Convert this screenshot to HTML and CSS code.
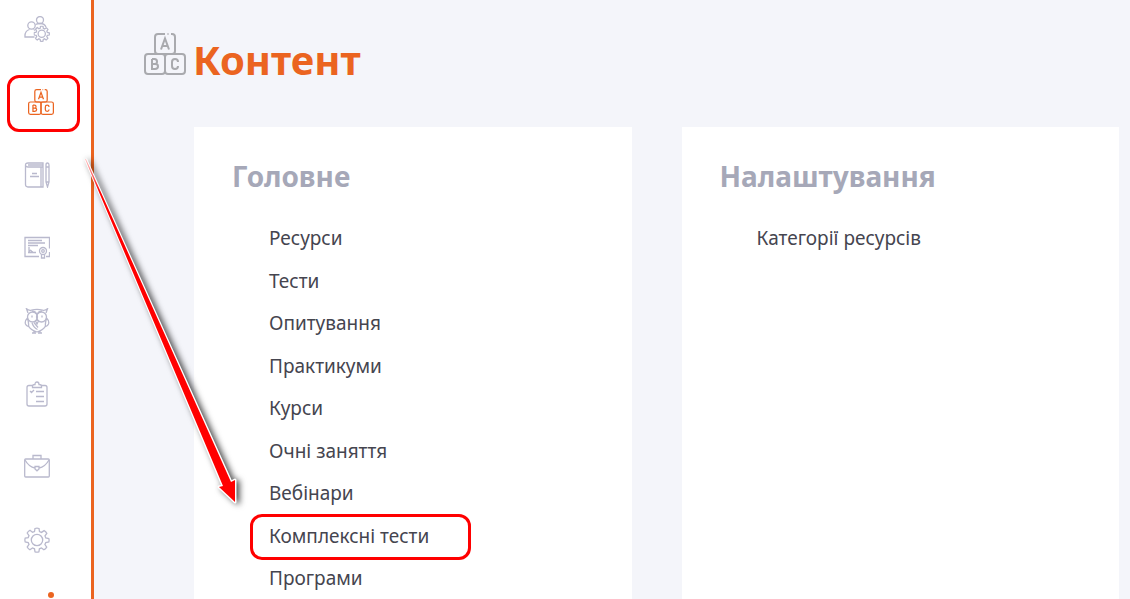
FILE: index.html
```html
<!DOCTYPE html>
<html lang="uk">
<head>
    <meta charset="UTF-8">
    <meta name="viewport" content="width=device-width, initial-scale=1.0">
    <title>Контент</title>
    <link rel="stylesheet" href="styles.css">
</head>
<body>
    <!-- Shared icon shapes -->
    <svg class="sprite" aria-hidden="true">
        <symbol id="icon-blocks" viewBox="0 0 42 42">
            <path d="M21 1h-7q-3 0-3 3v14q0 3 3 3h14q3 0 3-3V4q0-3-3-3h-1M23.500 1h1"/>
            <rect x="1" y="21" width="20" height="20" rx="3"/>
            <rect x="21" y="21" width="20" height="20" rx="3"/>
            <path d="M17 16.500l4-11 4 11M18 13h6"/>
            <path d="M8 26v10h3q3 0 3-2.800 0-2.200-3-2.200H8M8 26h2.500q2.500 0 2.500 2.500T11 31"/>
            <path d="M34 29q0-3-3-3t-3 3v4q0 3 3 3t3-3"/>
        </symbol>
        <symbol id="icon-gear" viewBox="0 0 26 26">
            <path d="M10.500 4.500 11 1.500q2-.8 4 0l.5 3 2 .9 2.600-1.800q1.800 1 2.700 2.800L21 8.900l.8 2.100 3 .5q.6 1.500 0 3.500l-3 .5-.9 2 1.800 2.600q-1 1.700-2.800 2.700l-2.500-1.800-2 .8-.5 3q-2 .6-3.900 0l-.5-3-2-.8-2.600 1.800q-1.700-1-2.700-2.800L5 17.500l-.8-2-3-.5q-.6-2 0-3.900l3-.5.8-2L3.200 6q1-1.700 2.800-2.700l2.500 1.900Z"/>
            <circle cx="13" cy="13" r="5.700"/>
        </symbol>
    </svg>

    <nav class="sidebar">
        <a href="#" aria-label="Користувачі">
            <svg viewBox="0 0 26 26">
                <circle cx="16" cy="4" r="3.500"/>
                <circle cx="7.500" cy="9.500" r="3.700"/>
                <path d="M10.500 21H1q-.5-6 4.500-7.500M9.500 13.500q1 .3 1.500 1M11.500 8.500q2-1 5-1 4 0 5.500 3.500"/>
                <use href="#icon-gear" x="9.500" y="9.500" width="16.500" height="16.500" class="small-gear"/>
            </svg>
        </a>
        <a href="#" class="active" aria-label="Контент">
            <svg viewBox="0 0 42 42"><use href="#icon-blocks"/></svg>
        </a>
        <a href="#" aria-label="Журнал">
            <svg viewBox="0 0 26 26">
                <path d="M19 5H4Q1.500 5 1.500 3T4 1h15v24H4q-2.500 0-2.500-2.500V3M4 3h15M17 5v20M8 11.500h5M6 14.500h9"/>
                <path d="M22 3q0-2 1.500-2T25 3v17l-1.500 5-1.500-5ZM22 5h3M22 20h3"/>
            </svg>
        </a>
        <a href="#" aria-label="Сертифікати">
            <svg viewBox="0 0 26 26">
                <path d="M15 21.500H1v-19h24.500v11M25.500 17v4.500H22M4 5.500h14M4 8h17M4 10.500h10M4 17.500h8M5 12v5.500q1-3 2-2 .5 1.500 2 1.500"/>
                <circle cx="19" cy="16" r="3.500"/>
                <circle cx="19" cy="16" r="1.300"/>
                <path d="M17.500 19.500V23h3v-3.500"/>
            </svg>
        </a>
        <a href="#" aria-label="Знання">
            <svg viewBox="0 0 26 26">
                <path d="M4 5 2.500.8Q5 3 7.500 2.200q5.500-1.500 11 0Q21 3 23.500.8L22 5"/>
                <circle cx="8.500" cy="9" r="5"/>
                <circle cx="17.500" cy="9" r="5"/>
                <path d="M8 7.500v2M18 7.500v2M11.500 13l1.500-1.500 1.500 1.500-1.500 3ZM8 3q3.500.5 5 3 1.500-2.500 5-3"/>
                <path d="M3.500 10q-3 3-2 6 1 2.500 3 2.500.5-3-1-8.500M22.500 10q3 3 2 6-1 2.500-3 2.500-.5-3 1-8.500M4.500 18q2 4 8.500 6 6.500-2 8.500-6M8 15q2 5 5.500 6.500M10 14.500l4 5M8 25h4M14 25h4M10 23v2M16 23v2"/>
            </svg>
        </a>
        <a href="#" aria-label="Завдання">
            <svg viewBox="0 0 26 26">
                <path d="M9 4.500H5q-2 0-2 2V23q0 2 2 2h16q2 0 2-2V6.500q0-2-2-2h-4M8.500 6.500V5q0-1.500 2.500-1.500Q11 1 13 1t2 2.500q2.500 0 2.500 1.500v1.500ZM6 10l1.500 1.500L10 9M12 10.500h8M12 15.500h8M12 20.500h8"/>
            </svg>
        </a>
        <a href="#" aria-label="Портфель">
            <svg viewBox="0 0 26 26">
                <rect x=".7" y="5" width="24.600" height="18" rx="1"/>
                <path d="M9 5V1.500h8V5M1 6q4 7 10 8M25 6q-4 7-10 8M11 12.500h4V15l-2 1.800-2-1.800Z"/>
            </svg>
        </a>
        <a href="#" aria-label="Налаштування">
            <svg viewBox="0 0 26 26"><use href="#icon-gear"/></svg>
        </a>
        <a href="#" aria-label="Сповіщення">
            <svg viewBox="0 0 26 26">
                <path d="M4 20q3-3 3-9 0-7 6-7t6 7q0 6 3 9ZM10 23q3 3 6 0"/>
            </svg>
            <span class="badge"></span>
        </a>
    </nav>

    <main>
        <header class="page-header">
            <svg viewBox="0 0 42 42"><use href="#icon-blocks"/></svg>
            <h1>Контент</h1>
        </header>

        <div class="panels">
            <section class="panel">
                <h2>Головне</h2>
                <ul>
                    <li><a href="#">Ресурси</a></li>
                    <li><a href="#">Тести</a></li>
                    <li><a href="#">Опитування</a></li>
                    <li><a href="#">Практикуми</a></li>
                    <li><a href="#">Курси</a></li>
                    <li><a href="#">Очні заняття</a></li>
                    <li><a href="#">Вебінари</a></li>
                    <li class="marked"><a href="#">Комплексні тести</a></li>
                    <li><a href="#">Програми</a></li>
                </ul>
            </section>
            <section class="panel">
                <h2>Налаштування</h2>
                <ul>
                    <li><a href="#">Категорії ресурсів</a></li>
                </ul>
            </section>
        </div>
    </main>

    <!-- Arrow from the menu item to the marked link -->
    <svg class="arrow" viewBox="0 0 170 370" aria-hidden="true">
        <defs>
            <linearGradient id="arrow-fade" gradientUnits="userSpaceOnUse" x1="5" y1="8" x2="20" y2="42">
                <stop offset="0" stop-color="#fcc"/>
                <stop offset="1" stop-color="red"/>
            </linearGradient>
        </defs>
        <path class="arrow-edge" d="M6 10 143 336 139 337 155 352 155 330 151 332Z"/>
        <path class="arrow-fill" d="M5 9 143 336 139 337 155 352 155 330 151 332 6 9Z"/>
    </svg>
</body>
</html>
```
FILE: styles.css
```css
*, *::after {
    box-sizing: border-box;
}
body {
    display: flex;
    height: 100vh;
    margin: 0;
    overflow: hidden;
    position: relative;
    background-color: #f4f5fa;
    color: #45454f;
    font-family: "Segoe UI", "Noto Sans", sans-serif;
    font-size: 19px;
    line-height: 1.5;
}
svg {
    fill: none;
    stroke: currentColor;
    stroke-width: 1.3;
}
a {
    color: inherit;
    text-decoration: none;
}
h1, h2, ul {
    margin: 0;
}
.sprite {
    position: absolute;
    width: 0;
    height: 0;
}

/* Sidebar */
.sidebar {
    display: flex;
    flex: none;
    flex-direction: column;
    align-items: center;
    gap: 47px;
    width: 94px;
    padding: 16px 17px 0 0;
    overflow: hidden;
    border-right: 3px solid #eb6420;
    background-color: white;
    color: #b9b9cd;
}
.sidebar a {
    position: relative;
    flex: none;
    width: 26px;
    height: 26px;
}
.sidebar svg {
    display: block;
    width: 26px;
    height: 26px;
}
.small-gear {
    stroke-width: 2;
}
.sidebar .active {
    color: #eb6420;
}
.active svg {
    margin-left: 4px;
    stroke-width: 2;
}
.active::after,
.marked::after {
    content: "";
    position: absolute;
    border: 3px solid red;
    border-radius: 12px;
}
.active::after {
    inset: -14px -30px -17px -17px;
}
.badge {
    position: absolute;
    top: -8px;
    right: -4px;
    width: 6px;
    height: 6px;
    border-radius: 50%;
    background-color: #eb6420;
}

/* Content */
main {
    flex: 1;
    padding: 26px 11px 0 50px;
}
.page-header {
    display: flex;
    align-items: center;
    gap: 7px;
    height: 68px;
}
.page-header svg {
    width: 42px;
    height: 42px;
    margin-bottom: 12px;
    color: #a9aaae;
    stroke-width: 2;
}
h1 {
    color: #eb6420;
    font-size: 40px;
    line-height: 64px;
}
.panels {
    display: grid;
    grid-template-columns: 1fr 1fr;
    gap: 50px;
    margin: 33px 0 0 50px;
}
.panel {
    min-height: 480px;
    padding: 28px 38px;
    background-color: white;
}
h2 {
    color: #a6a8b8;
    font-size: 28px;
    line-height: 42px;
}
ul {
    display: flex;
    flex-direction: column;
    gap: 14px;
    margin-top: 27px;
    padding-left: 37px;
    list-style: none;
}
.marked {
    position: relative;
}
.marked::after {
    top: -8px;
    left: -19px;
    width: 221px;
    height: 46px;
    pointer-events: none;
}

.arrow {
    position: absolute;
    top: 150px;
    left: 80px;
    width: 170px;
    height: 370px;
    overflow: visible;
    pointer-events: none;
    filter: drop-shadow(3px 1px 3px rgba(0, 0, 0, 0.7));
}
.arrow-edge {
    stroke: white;
    stroke-width: 3;
    stroke-linejoin: round;
}
.arrow-fill {
    fill: url(#arrow-fade);
    stroke: none;
}
```
